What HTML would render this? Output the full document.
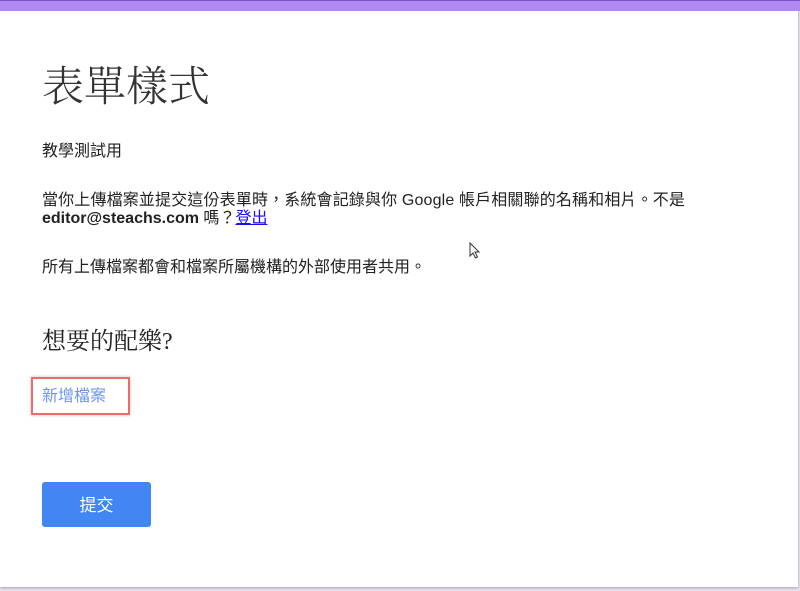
<!DOCTYPE html>
<html><head><meta charset="utf-8"><style>
html,body{margin:0;padding:0;width:800px;height:591px;overflow:hidden;background:#e9e7ec;}
.card{position:absolute;left:0;top:0;width:798px;height:587px;background:#fff;box-shadow:0 1px 3px rgba(80,60,120,.45);}
.bar{position:absolute;left:0;top:0;width:800px;height:11px;background:#b08af2;border-top:1px solid #7a55c8;box-sizing:border-box;}
.t{position:absolute;left:42px;font-family:"Liberation Sans","Noto Sans CJK TC",sans-serif;color:#222;white-space:nowrap;}
.title{top:62px;font-size:42px;font-family:"Liberation Serif","Noto Serif CJK SC",serif;font-weight:300;color:#333;line-height:52px;}
.b{font-size:16px;line-height:18px;}
a{color:#1a0dee;text-decoration:underline;}
.box{position:absolute;left:31px;top:377px;width:99px;height:38px;border:2px solid #f06a6a;box-sizing:border-box;box-shadow:0 0 3px rgba(0,0,0,.25);}
.btn{position:absolute;left:42px;top:482px;width:109px;height:45px;background:#4286f4;border-radius:3px;color:#fff;font-family:"Liberation Sans","Noto Sans CJK TC",sans-serif;font-size:17px;line-height:47px;text-align:center;}
</style></head><body>
<div class="card"></div>
<div class="bar"></div>
<div class="t title">表單樣式</div>
<div class="t b" style="top:143px">教學測試用</div>
<div class="t b" style="top:192px;letter-spacing:0.15px">當你上傳檔案並提交這份表單時，系統會記錄與你 Google 帳戶相關聯的名稱和相片。不是</div>
<div class="t b" style="top:210px"><b>editor@steachs.com</b> 嗎？<a>登出</a></div>
<div class="t b" style="top:259px">所有上傳檔案都會和檔案所屬機構的外部使用者共用。</div>
<div class="t" style="top:327px;font-size:24px;line-height:30px;font-family:'Liberation Serif','Noto Serif CJK SC',serif;">想要的配樂?</div>
<div class="box"></div>
<div class="t b" style="top:388px;color:#6d95f2;">新增檔案</div>
<div class="btn">提交</div>
<svg style="position:absolute;left:469px;top:242px" width="12" height="18" viewBox="0 0 12 18"><path d="M1 1 L1 14 L4 11 L6.5 16 L8.5 15 L6 10 L10 10 Z" fill="#fff" stroke="#333" stroke-width="1"/></svg>
</body></html>
